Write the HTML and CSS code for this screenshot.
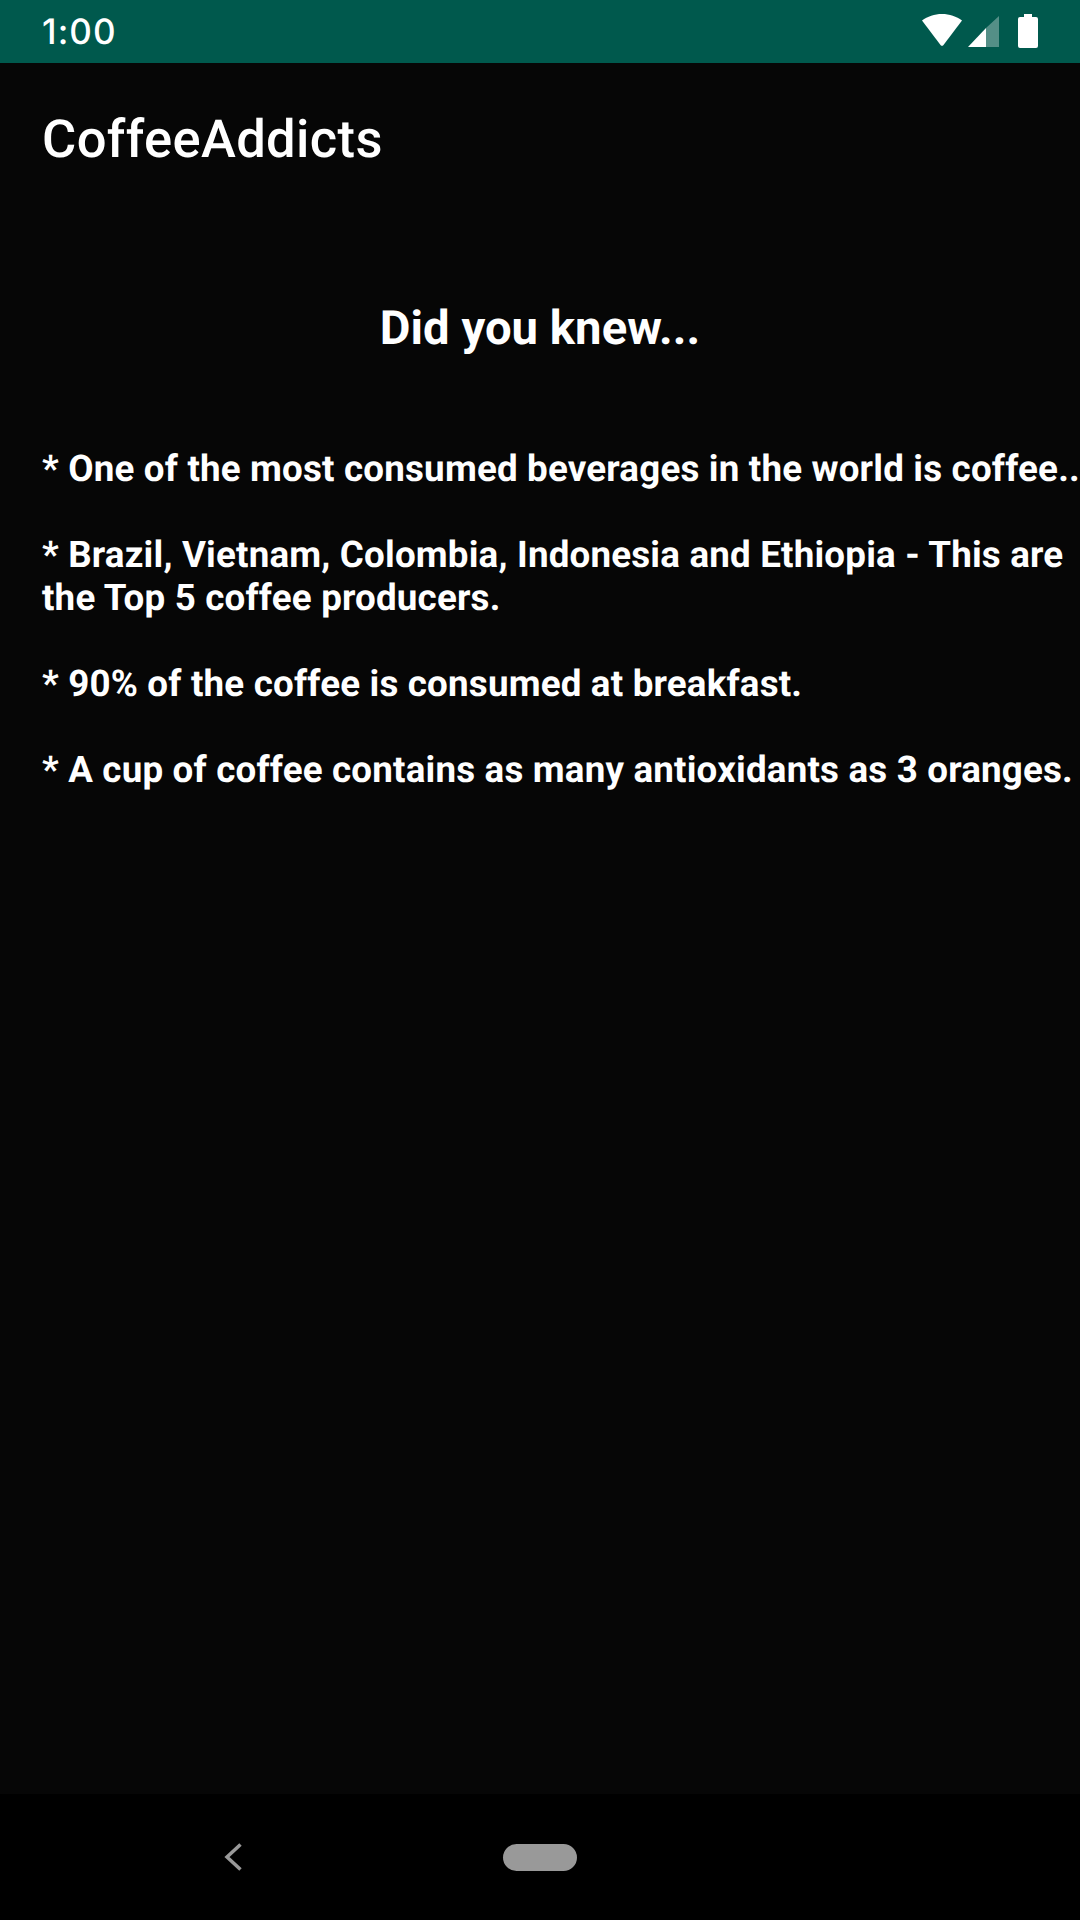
FILE: index.html
```html
<!DOCTYPE html>
<html lang="en">
<head>
<meta charset="utf-8">
<title>CoffeeAddicts</title>
<link rel="stylesheet" href="styles.css">
</head>
<body>
<div class="screen">
  <header class="status-bar">
    <span class="time">1:00</span>
    <div class="status-icons">
      <svg class="icon-wifi" width="40" height="32" viewBox="0 0 40 32"><path d="M0 6.500C5.500 2.500 12.500 0 20 0S34.500 2.500 40 6.500L21.500 31a2 2 0 0 1-3 0Z" fill="#fff"/></svg>
      <svg class="icon-signal" width="31" height="31" viewBox="0 0 31 31"><path d="M31 0V31H18V12Z" fill="#fff" fill-opacity=".33"/><path d="M18 12V31H0Z" fill="#fff"/></svg>
      <svg class="icon-battery" width="20" height="34" viewBox="0 0 20 34"><path d="M6 0h8v3h4a2 2 0 0 1 2 2v27a2 2 0 0 1-2 2H2a2 2 0 0 1-2-2V5a2 2 0 0 1 2-2h4Z" fill="#fff"/></svg>
    </div>
  </header>
  <div class="app-bar">CoffeeAddicts</div>
  <main class="content">
    <h1 class="heading">Did you knew...</h1>
    <p class="fact nowrap">* One of the most consumed beverages in the world is coffee..</p>
    <p class="fact">* Brazil, Vietnam, Colombia, Indonesia and Ethiopia - This are the Top 5 coffee producers.</p>
    <p class="fact">* 90% of the coffee is consumed at breakfast.</p>
    <p class="fact">* A cup of coffee contains as many antioxidants as 3 oranges.</p>
  </main>
  <footer class="nav-bar">
    <svg class="nav-back" width="18" height="28" viewBox="0 0 18 28"><path d="M16.500 1.500 3 14l13.500 12.500" fill="none" stroke="#999" stroke-width="3.500"/></svg>
    <div class="nav-home"></div>
  </footer>
</div>
</body>
</html>
```
FILE: styles.css
```css
* { box-sizing: border-box; }
html, body { margin: 0; padding: 0; }
body { width: 1080px; height: 1920px; overflow: hidden; background: #060606; color: #fff; font-family: Roboto, "Noto Sans", sans-serif; text-rendering: geometricPrecision; }
.screen { width: 1080px; height: 1920px; display: flex; flex-direction: column; overflow: hidden; }
.status-bar { height: 63px; flex: none; background: #00594d; display: flex; align-items: center; justify-content: space-between; padding: 0 42px; }
.time { font-family: Inter, Roboto, sans-serif; font-size: 35px; font-weight: 500; letter-spacing: 1.1px; line-height: 63px; padding-top: 1px; }
.status-icons { display: flex; align-items: flex-start; height: 63px; padding-top: 14px; }
.icon-signal { margin: 2px 0 0 6px; }
.icon-battery { margin-left: 19px; }
.app-bar { height: 147px; flex: none; display: flex; align-items: center; padding: 4px 0 0 42px; font-size: 52.5px; font-weight: 500; letter-spacing: 0.37px; }
.content { flex: 1; padding: 0 0 0 42px; }
.heading { margin: 90px 0 91px -42px; text-align: center; font-size: 47.25px; font-weight: 700; letter-spacing: 0.03px; line-height: 56px; }
.fact { margin: 0 0 43px; width: 1038px; font-size: 36.75px; font-weight: 700; letter-spacing: 0.18px; line-height: 43px; }
.nowrap { white-space: nowrap; }
.nav-bar { height: 126px; flex: none; background: #000; display: flex; align-items: center; justify-content: center; position: relative; }
.nav-home { width: 74px; height: 27px; border-radius: 14px; background: #999; }
.nav-back { position: absolute; left: 224px; top: 49px; }
```
